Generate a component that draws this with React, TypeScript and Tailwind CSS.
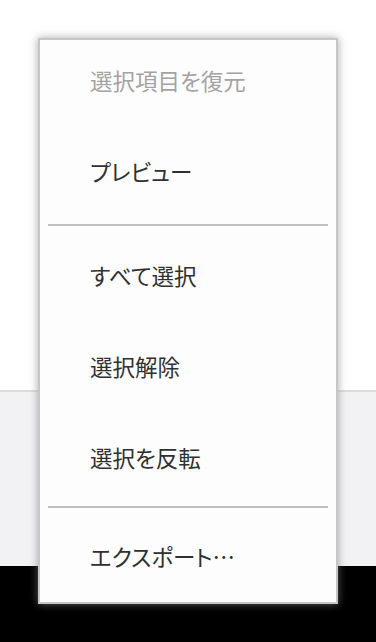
import React from "react";

type Item = { label: string; disabled?: boolean; h: string };

const rowBase = "flex items-center pl-[50px] text-[22.5px]";

function Row({ item }: { item: Item }) {
  return (
    <div
      className={
        item.disabled
          ? `${rowBase} ${item.h} text-[#a3a3a3]`
          : `${rowBase} ${item.h} text-[#303030]`
      }
    >
      {item.label}
    </div>
  );
}

function Separator({ className }: { className: string }) {
  return (
    <div className={className}>
      <div className="h-[2px] w-full bg-[#c0c0c0]" />
    </div>
  );
}

function ContextMenu() {
  return (
    <div className="absolute left-[38px] top-[38px] w-[300px] border-2 border-[#c6c6c6] bg-[#fdfdfd] shadow-[0_0_8px_rgba(130,130,130,0.7)]">
      <Row item={{ label: "選択項目を復元", disabled: true, h: "h-[86px] pb-[5px]" }} />
      <Row item={{ label: "プレビュー", h: "h-[91px]" }} />
      <Separator className="h-[13px] px-[8px] pt-[7px]" />
      <Row item={{ label: "すべて選択", h: "h-[91px]" }} />
      <Row item={{ label: "選択解除", h: "h-[91px]" }} />
      <Row item={{ label: "選択を反転", h: "h-[91px]" }} />
      <Separator className="h-[8px] px-[8px] pt-[3px]" />
      <Row item={{ label: "エクスポート…", h: "h-[91px]" }} />
    </div>
  );
}

export default function App() {
  return (
    <div
      className="relative flex h-[642px] w-[376px] flex-col overflow-hidden [font-feature-settings:'palt']"
      style={{ fontFamily: '"Noto Sans CJK JP", "Noto Sans", sans-serif' }}
    >
      {/* page behind the menu */}
      <div className="h-[390px] bg-white" />
      <div className="h-[2px] bg-[#dcdcdc]" />
      <div className="h-[174px] bg-[#f2f2f4]" />
      <div className="flex-1 bg-black" />

      <ContextMenu />
    </div>
  );
}
